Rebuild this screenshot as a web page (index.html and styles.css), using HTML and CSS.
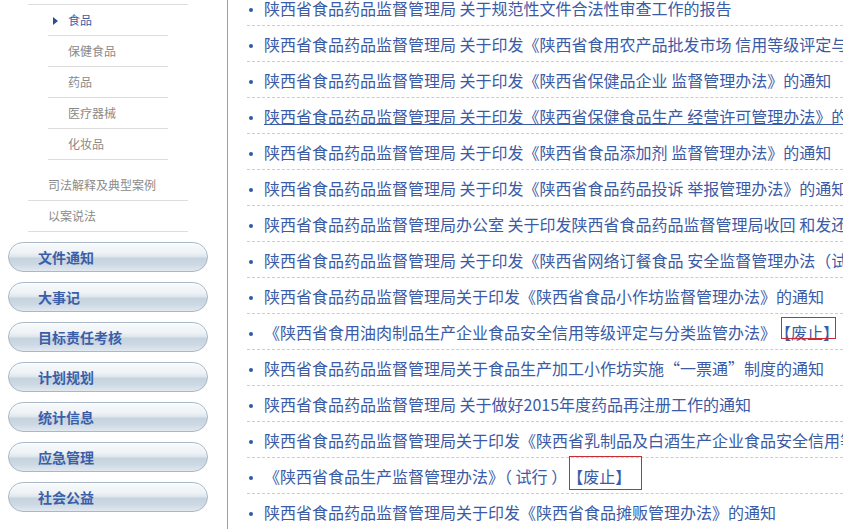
FILE: index.html
```html
<!DOCTYPE html>
<html lang="zh-CN">
<head>
    <meta charset="UTF-8">
    <title>政策法规</title>
    <link rel="stylesheet" href="styles.css">
</head>
<body>
    <div class="page">
        <aside class="sidebar">
            <div class="parent-end"></div>
            <ul class="sub-menu">
                <li class="active"><a href="#">食品</a></li>
                <li><a href="#">保健食品</a></li>
                <li><a href="#">药品</a></li>
                <li><a href="#">医疗器械</a></li>
                <li><a href="#">化妆品</a></li>
            </ul>
            <ul class="side-links">
                <li><a href="#">司法解释及典型案例</a></li>
                <li><a href="#">以案说法</a></li>
            </ul>
            <ul class="nav-buttons">
                <li><a href="#">文件通知</a></li>
                <li><a href="#">大事记</a></li>
                <li><a href="#">目标责任考核</a></li>
                <li><a href="#">计划规划</a></li>
                <li><a href="#">统计信息</a></li>
                <li><a href="#">应急管理</a></li>
                <li><a href="#">社会公益</a></li>
            </ul>
        </aside>

        <main class="content">
            <ul class="doc-list">
                <li><a href="#">陕西省食品药品监督管理局 关于规范性文件合法性审查工作的报告</a></li>
                <li><a href="#">陕西省食品药品监督管理局 关于印发《陕西省食用农产品批发市场 信用等级评定与分类监管办法》的通知</a></li>
                <li><a href="#">陕西省食品药品监督管理局 关于印发《陕西省保健品企业 监督管理办法》的通知</a></li>
                <li class="hover"><a href="#">陕西省食品药品监督管理局 关于印发《陕西省保健食品生产 经营许可管理办法》的通知</a></li>
                <li><a href="#">陕西省食品药品监督管理局 关于印发《陕西省食品添加剂 监督管理办法》的通知</a></li>
                <li><a href="#">陕西省食品药品监督管理局 关于印发《陕西省食品药品投诉 举报管理办法》的通知</a></li>
                <li><a href="#">陕西省食品药品监督管理局办公室 关于印发陕西省食品药品监督管理局收回 和发还罚没物品管理办法的通知</a></li>
                <li><a href="#">陕西省食品药品监督管理局 关于印发《陕西省网络订餐食品 安全监督管理办法（试行）》的通知</a></li>
                <li><a href="#">陕西省食品药品监督管理局关于印发《陕西省食品小作坊监督管理办法》的通知</a></li>
                <li><a href="#">《陕西省食用油肉制品生产企业食品安全信用等级评定与分类监管办法》<span class="mark mark-a">【废止】</span></a></li>
                <li><a href="#">陕西省食品药品监督管理局关于食品生产加工小作坊实施“一票通”制度的通知</a></li>
                <li><a href="#">陕西省食品药品监督管理局 关于做好2015年度药品再注册工作的通知</a></li>
                <li><a href="#">陕西省食品药品监督管理局关于印发《陕西省乳制品及白酒生产企业食品安全信用等级评定与分类监管办法》的通知</a></li>
                <li><a href="#">《陕西省食品生产监督管理办法》（ 试行 ）<span class="mark mark-b">【废止】</span></a></li>
                <li><a href="#">陕西省食品药品监督管理局关于印发《陕西省食品摊贩管理办法》的通知</a></li>
            </ul>
        </main>
    </div>
</body>
</html>
```

FILE: styles.css
```css
body {
    margin: 0;
    font-family: "Noto Sans CJK SC", "Microsoft YaHei", sans-serif;
    background-color: #fff;
    overflow: hidden;
}
ul {
    list-style: none;
    margin: 0;
    padding: 0;
}
a {
    text-decoration: none;
}
.page {
    display: flex;
    height: 529px;
}

/* left column */
.sidebar {
    width: 227px;
    flex-shrink: 0;
    border-right: 1px solid #6cb2bf;
}
.parent-end {
    height: 4px;
    margin: 0 39px 0 28px;
    border-bottom: 1px solid #ddd;
}
.sub-menu {
    margin: 0 59px 0 48px;
    padding-bottom: 10px;
}
.sub-menu li,
.side-links li {
    height: 30px;
    line-height: 30px;
    padding-left: 20px;
    border-bottom: 1px solid #ddd;
    font-size: 12px;
}
.sub-menu a,
.side-links a {
    color: #8a8a8a;
}
.sub-menu li.active a {
    color: #3b5ba6;
}
.sub-menu li.active::before {
    content: "";
    display: inline-block;
    vertical-align: middle;
    margin: -2px 10px 0 -15px;
    border-left: 5px solid #2b4f8e;
    border-top: 4px solid transparent;
    border-bottom: 4px solid transparent;
}
.side-links {
    margin: 0 39px 0 28px;
}
.nav-buttons {
    width: 200px;
    margin: 10px 0 0 8px;
    display: flex;
    flex-direction: column;
    gap: 10px;
}
.nav-buttons a {
    display: block;
    height: 28px;
    line-height: 28px;
    padding-left: 29px;
    border: 1px solid #a9b8c6;
    border-radius: 15px;
    font-size: 14px;
    font-weight: bold;
    color: #3b5ea8;
    background: linear-gradient(to bottom, #f8fafb 0%, #eef2f5 35%, #dfe7ee 48%, #c6d4e0 55%, #cdd9e4 78%, #e2e9ef 100%);
    box-shadow: inset 0 1px 0 #fff;
}

/* right column */
.content {
    flex: 1;
    overflow: hidden;
}
.doc-list {
    margin: -10px 0 0 19px;
}
.doc-list li {
    padding: 2px 0 0 17px;
    line-height: 33px;
    border-bottom: 1px dashed #ccc;
    white-space: nowrap;
    font-size: 16px;
}
.doc-list li::before {
    content: "";
    display: inline-block;
    vertical-align: middle;
    width: 4px;
    height: 4px;
    margin: -2px 11px 0 -15px;
    border-radius: 50%;
    background-color: #2c5aa8;
}
.doc-list a {
    color: #3b5ba6;
}
.doc-list li.hover a {
    text-decoration: underline;
}
.mark {
    position: relative;
}
.mark::after {
    content: "";
    position: absolute;
    border: 1px solid #cc2b36;
}
.mark-a {
    margin-left: 7px;
}
.mark-a::after {
    left: -2px;
    right: 3px;
    top: -3px;
    height: 20px;
}
.mark-b {
    margin-left: 8px;
}
.mark-b::after {
    left: -6px;
    right: -11px;
    top: -8px;
    height: 32px;
}
```
